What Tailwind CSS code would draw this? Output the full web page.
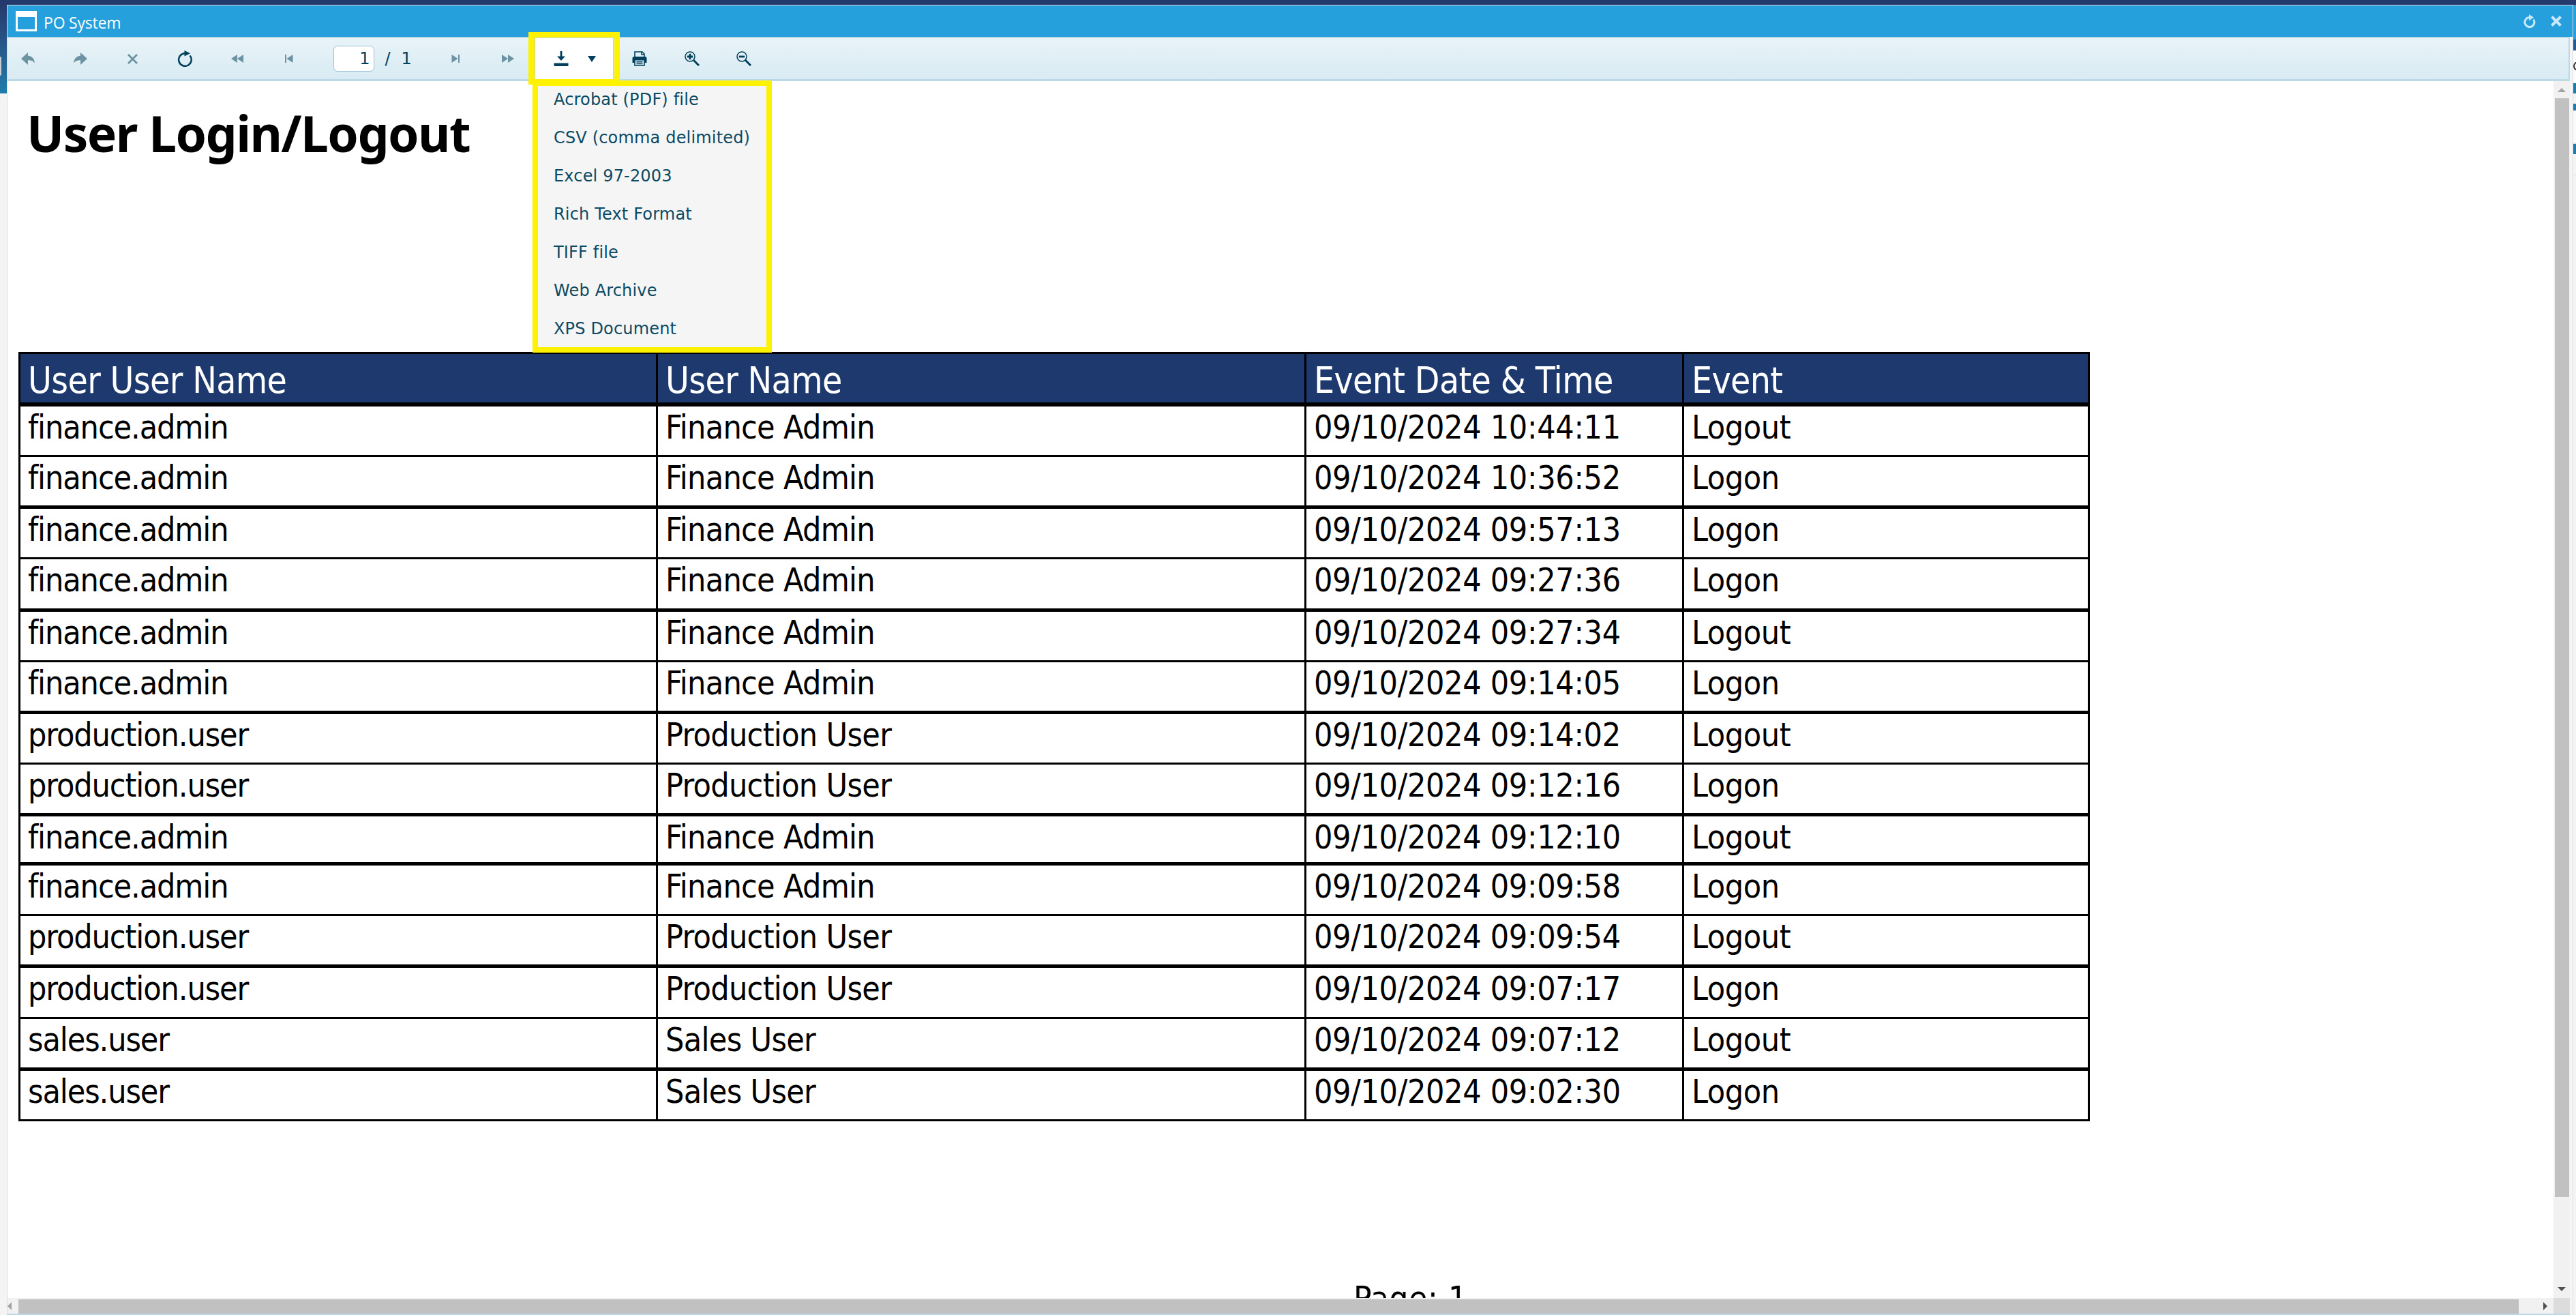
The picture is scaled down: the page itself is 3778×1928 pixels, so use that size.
<!DOCTYPE html>
<html lang="en">
<head>
    <meta charset="UTF-8">
    <meta name="viewport" content="width=device-width, initial-scale=1.0">
    <title>PO System</title>
    <script src="https://cdn.jsdelivr.net/npm/@tailwindcss/browser@4"></script>
</head>
<body class="h-[1928px] w-[3778px] overflow-hidden bg-[#f4f4f4] flex flex-col font-['DejaVu_Sans']">
    <div class="h-[7px] shrink-0 bg-[#253a6c]"></div>
    <div class="flex grow min-h-0">
        <!-- page behind the window, left edge -->
        <div class="w-[10px] shrink-0 flex flex-col">
            <div class="h-[130px] bg-linear-to-b from-[#253a6c] to-[#1c7dac] pt-[76px]">
                <div class="h-[28px] w-[2px] rounded-r bg-[#c8cdd2]"></div>
            </div>
        </div>

        <!-- window -->
        <div class="w-[3764px] shrink-0 border-l border-r border-t border-[#dcdcdc] bg-white flex flex-col">
            <div class="h-[46px] shrink-0 bg-[#25a0dc] flex items-center pl-[12px] pr-[16px] text-white">
                <div class="w-[31px] h-[30px] border-[3px] border-t-[9px] border-white"></div>
                <span class="ml-[10px] text-[23px] leading-none tracking-[-0.2px] font-['Open_Sans'] relative top-[2px]">PO System</span>
                <div class="ml-auto flex items-center gap-[22px]">
                    <svg class="w-[18px] h-[20px]" viewBox="0 0 18 20" fill="none" stroke="#c9e9fa" stroke-width="3"><path d="M14.6 7.5A7 7 0 1 1 8 4.6"/><path d="M8 0l7 4.6-7 4.6z" fill="#c9e9fa" stroke="none"/></svg>
                    <svg class="w-[16px] h-[16px]" viewBox="0 0 16 16" fill="none" stroke="#c9e9fa" stroke-width="4"><path d="M1.5 1.5l13 13M14.5 1.5l-13 13"/></svg>
                </div>
            </div>

            <div class="flex grow min-h-0">
                <div class="w-[3758px] shrink-0 flex flex-col">
                    <!-- toolbar -->
                    <div class="relative h-[65px] shrink-0 border-t-2 border-b-3 border-r-2 border-[#bcdae6] bg-linear-to-b from-[#e8f3f8] to-[#d9ebf3] flex items-center text-[#00405c]">
                        <div class="flex items-center gap-[16.7px] *:w-[60px] *:flex *:justify-center text-[#6b93a2]">
                            <button><svg class="w-[20px] h-[18px]" viewBox="0 0 20 18" fill="currentColor"><path d="M0 9L10 0v4.8c6 .4 9.500 4.500 10 10.700-2.500-3-5.500-4.300-10-4.200V18z"/></svg></button>
                            <button><svg class="w-[20px] h-[18px]" viewBox="0 0 20 18" fill="currentColor"><path d="M20 9L10 0v4.800C4 5.200.5 9.300 0 15.500c2.500-3 5.500-4.300 10-4.200V18z"/></svg></button>
                            <button><svg class="w-[15px] h-[15px]" viewBox="0 0 15 15" fill="none" stroke="currentColor" stroke-width="2.800"><path d="M1 1l13 13M14 1L1 14"/></svg></button>
                            <button class="text-[#00405c]"><svg class="w-[22px] h-[24px]" viewBox="0 0 22 24" fill="none" stroke="currentColor" stroke-width="2.500"><path d="M18.500 7.500A9.300 9.300 0 1 1 11 4.200"/><path d="M10.500 0l8.500 4.300-8.500 4.300z" fill="currentColor" stroke="none"/></svg></button>
                            <button><svg class="w-[18px] h-[12px]" viewBox="0 0 18 12" fill="currentColor"><path d="M9 0v12L0 6zM18 0v12L9 6z"/></svg></button>
                            <button><svg class="w-[12px] h-[12px]" viewBox="0 0 12 12" fill="currentColor"><path d="M0 0h2v12H0zM11.500 0v12L2.500 6z"/></svg></button>
                        </div>
                        <div class="w-[184px] flex items-center text-[24px] leading-none pl-[35px]">
                            <div class="w-[60px] h-[38px] shrink-0 rounded-md border border-[#9fbfd6] bg-white flex items-center justify-end pr-[6px]">1</div>
                            <span class="ml-[15px]">/</span>
                            <span class="ml-[16px]">1</span>
                        </div>
                        <div class="flex items-center gap-[17px] *:w-[60px] *:flex *:justify-center text-[#6b93a2]">
                            <button><svg class="w-[12px] h-[12px]" viewBox="0 0 12 12" fill="currentColor"><path d="M10 0h2v12h-2zM.5 0v12l9-6z"/></svg></button>
                            <button><svg class="w-[18px] h-[12px]" viewBox="0 0 18 12" fill="currentColor"><path d="M0 0v12l9-6zM9 0v12l9-6z"/></svg></button>
                        </div>
                        <div class="w-[133px] h-[60px] flex items-center pl-[9px] pr-[8px]">
                            <div class="w-full h-full bg-white border-x border-[#b9cfd8] flex items-center pl-[27px]">
                                <svg class="w-[22px] h-[22px]" viewBox="0 0 22 22" fill="currentColor"><path d="M.5 17.500h21V22H.500zM9.600 0h2.800v7.500h4.600l-6 6.500-6-6.500h4.600z"/></svg>
                                <svg class="w-[12px] h-[9px] ml-[28px]" viewBox="0 0 12 9" fill="currentColor"><path d="M0 0h12L6 9z"/></svg>
                            </div>
                        </div>
                        <div class="flex items-center gap-[16.500px] *:w-[60px] *:flex *:justify-center">
                            <button><svg class="w-[22px] h-[22px]" viewBox="0 0 22 22" fill="none" stroke="currentColor" stroke-width="1.600"><path d="M4 8.500V1h11l3 3v4.500"/><path d="M14 1v4h4"/><path d="M3 8h16a2.500 2.500 0 0 1 2.500 2.500V17H18v-3.500H4V17H.5v-6.500A2.500 2.500 0 0 1 3 8z" fill="currentColor" stroke="none"/><path d="M4 13.500v7.500h14v-7.500M6.500 15.800h9M6.500 18.500h9"/></svg></button>
                            <button><svg class="w-[22px] h-[22px]" viewBox="0 0 22 22" fill="none" stroke="currentColor"><circle cx="8" cy="8" r="7" stroke-width="1.500"/><path d="M8 3.800v8.400M3.800 8h8.400" stroke-width="2.800"/><path d="M13 13l8 8" stroke-width="3"/></svg></button>
                            <button><svg class="w-[22px] h-[22px]" viewBox="0 0 22 22" fill="none" stroke="currentColor"><circle cx="8" cy="8" r="7" stroke-width="1.500"/><path d="M3.800 8h8.400" stroke-width="2.800"/><path d="M13 13l8 8" stroke-width="3"/></svg></button>
                        </div>

                        <!-- export menu -->
                        <div class="absolute z-20 left-[764px] top-[-9px] w-[134px] h-[77px] border-8 border-l-9 border-[#fff200] pointer-events-none"></div>
                        <ul class="absolute z-10 left-[770px] top-[62px] w-[351px] h-[399px] border-8 border-[#fff200] bg-[#f5f5f5] pl-[23px] text-[24px] leading-[56px] tracking-[0.17px] text-[#0c4a63] whitespace-nowrap">
                            <li class="h-[56px] -mt-[8px]">Acrobat (PDF) file</li>
                            <li class="h-[56px]">CSV (comma delimited)</li>
                            <li class="h-[56px]">Excel 97-2003</li>
                            <li class="h-[56px]">Rich Text Format</li>
                            <li class="h-[56px]">TIFF file</li>
                            <li class="h-[56px]">Web Archive</li>
                            <li class="h-[56px]">XPS Document</li>
                        </ul>
                    </div>

                    <div class="flex grow min-h-0">
                        <!-- report page -->
                        <div class="w-[3734px] h-[1784px] shrink-0 overflow-hidden bg-white text-black pl-[16px] flex flex-col">
                            <h1 class="h-[397px] shrink-0 pt-[26px] pl-[12px] text-[73px] leading-[100px] tracking-[-1.55px] font-bold font-['Noto_Sans']">User Login/Logout</h1>
                            <div class="w-[3038px] shrink-0 border-t-3 border-r-3 border-black font-['DejaVu_Sans_Condensed','DejaVu_Sans'] font-stretch-condensed">
                                <div class="grid grid-cols-[935px_951px_554px_595px] h-[77px] border-b-6 border-black bg-[#1d396e] text-white text-[53px] leading-[62px] tracking-[-0.65px] *:border-l-3 *:border-black *:pl-[11px] *:pt-[8px]">
                                    <div>User User Name</div>
                                    <div>User Name</div>
                                    <div>Event Date &amp; Time</div>
                                    <div>Event</div>
                                </div>
                                <div id="rows"></div>
                            </div>
                            <p class="mt-[233px] ml-[1958px] text-[49px] leading-[56px] tracking-[0.6px] font-['DejaVu_Sans_Condensed','DejaVu_Sans'] font-stretch-condensed">Page: 1</p>
                        </div>
                        <div class="w-[24px] bg-[#f1f1f1] flex flex-col items-center pt-[10px] pb-[10px]">
                            <svg class="w-[12px] h-[6px] shrink-0" viewBox="0 0 12 6"><path d="M0 6h12L6 0z" fill="#a3a3a3"/></svg>
                            <div class="w-[21px] h-[1611px] mt-[9px] bg-[#c1c1c1]"></div>
                            <svg class="w-[12px] h-[6px] shrink-0 mt-auto" viewBox="0 0 12 6"><path d="M0 0h12L6 6z" fill="#505050"/></svg>
                        </div>
                    </div>

                    <div class="h-[23px] shrink-0 bg-[#f1f1f1] flex items-center">
                        <svg class="w-[6px] h-[12px]" viewBox="0 0 6 12"><path d="M6 0v12L0 6z" fill="#a3a3a3"/></svg>
                        <div class="w-[3667px] h-[21px] ml-[10px] mt-[2px] bg-[#c1c1c1]"></div>
                        <svg class="w-[6px] h-[12px] ml-[36px]" viewBox="0 0 6 12"><path d="M0 0v12l6-6z" fill="#505050"/></svg>
                        <div class="w-[24px] h-full ml-auto bg-[#dcdcdc]"></div>
                    </div>
                    <div class="h-[2px] shrink-0 bg-[#bcdae6]"></div>
                </div>
                <div class="grow bg-[#f5f5f5]"></div>
            </div>
        </div>

        <!-- page behind the window, right edge -->
        <div class="w-[4px] shrink-0 flex flex-col overflow-hidden">
            <div class="h-[51px] bg-[#25a0dc]"></div>
            <div class="h-[16px] bg-[#235a96]"></div>
            <div class="h-[48px] bg-white pt-[16px]"><div class="w-[16px] h-[14px] rounded-full border-2 border-[#333]"></div></div>
            <div class="h-[15px] bg-[#1c7dac]"></div>
            <div class="h-[15px]"></div>
            <div class="h-[10px] bg-[#1c7dac]"></div>
            <div class="h-[49px] bg-[#fafafa] border-b-2 border-[#cfe3ec]"></div>
            <div class="h-[15px] bg-[#1c7dac]"></div>
            <div class="h-[31px] border-b border-[#dcdcdc]"></div>
        </div>
    </div>
    <script>
        const fin = ["finance.admin", "Finance Admin"];
        const prod = ["production.user", "Production User"];
        const sales = ["sales.user", "Sales User"];
        const events = [
            [fin, "10:44:11", "Logout", "h-[74px] border-b-3"],
            [fin, "10:36:52", "Logon", "h-[76px] border-b-5"],
            [fin, "09:57:13", "Logon", "h-[74px] border-b-3"],
            [fin, "09:27:36", "Logon", "h-[77px] border-b-5"],
            [fin, "09:27:34", "Logout", "h-[74px] border-b-3"],
            [fin, "09:14:05", "Logon", "h-[76px] border-b-5"],
            [prod, "09:14:02", "Logout", "h-[74px] border-b-3"],
            [prod, "09:12:16", "Logon", "h-[76px] border-b-5"],
            [fin, "09:12:10", "Logout", "h-[72px] border-b-5"],
            [fin, "09:09:58", "Logon", "h-[74px] border-b-3"],
            [prod, "09:09:54", "Logout", "h-[76px] border-b-5"],
            [prod, "09:07:17", "Logon", "h-[75px] border-b-3"],
            [sales, "09:07:12", "Logout", "h-[76px] border-b-5"],
            [sales, "09:02:30", "Logon", "h-[74px] border-b-3"]
        ];

        document.getElementById("rows").innerHTML = events.map(([user, time, event, size]) => `
            <div class="grid grid-cols-[935px_951px_554px_595px] ${size} border-black text-[48px] leading-[56px] *:border-l-3 *:border-black *:pl-[11px] *:pt-[2px]">
                <div class="tracking-[-1.1px]">${user[0]}</div>
                <div class="tracking-[-0.7px]">${user[1]}</div>
                <div class="tracking-[-0.35px]">09/10/2024 ${time}</div>
                <div class="tracking-[-0.4px]">${event}</div>
            </div>`).join("");
    </script>
</body>
</html>
